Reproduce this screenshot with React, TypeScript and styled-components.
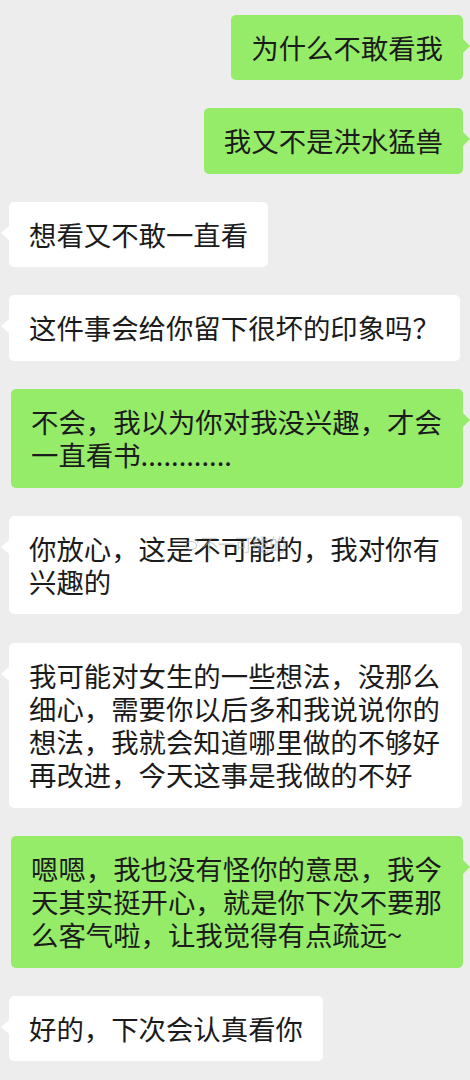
import React from "react";
import styled, { createGlobalStyle } from "styled-components";

const GlobalStyle = createGlobalStyle`
  html, body {
    margin: 0;
    padding: 0;
    background: #ededed;
  }
  body {
    font-family: "Noto Sans CJK SC", "Noto Sans", sans-serif;
  }
`;

const Chat = styled.div`
  display: flex;
  flex-direction: column;
  gap: 28.2px;
  padding: 15px 7px 20px 9px;
  min-height: 1080px;
  box-sizing: border-box;
  background: #ededed;
`;

const Row = styled.div<{ $mine: boolean }>`
  display: flex;
  justify-content: ${(p) => (p.$mine ? "flex-end" : "flex-start")};
  padding-left: ${(p) => (p.$mine ? "2px" : "0")};
`;

const Bubble = styled.div<{ $mine: boolean }>`
  position: relative;
  box-sizing: border-box;
  max-width: 453px;
  padding: 16px 20px;
  border-radius: 5px;
  background: ${(p) => (p.$mine ? "#95ec69" : "#ffffff")};
  color: #1b1b1b;
  font-size: 27.4px;
  line-height: 33.3px;
  word-break: break-all;

  &::after {
    content: "";
    position: absolute;
    top: 24px;
    width: 0;
    height: 0;
    border-top: 7px solid transparent;
    border-bottom: 7px solid transparent;
    ${(p) =>
      p.$mine
        ? `right: -7px; border-left: 7px solid #95ec69;`
        : `left: -8px; border-right: 8px solid #ffffff;`}
  }
`;

const Watermark = styled.span`
  position: absolute;
  left: 176px;
  top: 18px;
  display: flex;
  align-items: center;
  gap: 2px;
  font-size: 17px;
  line-height: 20px;
  color: rgba(170, 170, 170, 0.55);
  pointer-events: none;
  white-space: nowrap;
`;

type Msg = { mine: boolean; text: string; mark?: boolean };

const messages: Msg[] = [
  { mine: true, text: "为什么不敢看我" },
  { mine: true, text: "我又不是洪水猛兽" },
  { mine: false, text: "想看又不敢一直看" },
  { mine: false, text: "这件事会给你留下很坏的印象吗？" },
  { mine: true, text: "不会，我以为你对我没兴趣，才会一直看书............" },
  { mine: false, text: "你放心，这是不可能的，我对你有兴趣的", mark: true },
  {
    mine: false,
    text: "我可能对女生的一些想法，没那么细心，需要你以后多和我说说你的想法，我就会知道哪里做的不够好再改进，今天这事是我做的不好",
  },
  {
    mine: true,
    text: "嗯嗯，我也没有怪你的意思，我今天其实挺开心，就是你下次不要那么客气啦，让我觉得有点疏远~",
  },
  { mine: false, text: "好的，下次会认真看你" },
];

export default function App() {
  return (
    <>
      <GlobalStyle />
      <Chat>
        {messages.map((m, i) => (
          <Row key={i} $mine={m.mine}>
            <Bubble $mine={m.mine}>
              {m.text}
              {m.mark && (
                <Watermark>
                  <svg width="14" height="12" viewBox="0 0 14 12">
                    <ellipse cx="6" cy="7.5" rx="5.5" ry="4" fill="none" stroke="rgba(170,170,170,0.6)" strokeWidth="1.2" />
                    <path d="M9 1.5 A4 4 0 0 1 13 5" fill="none" stroke="rgba(170,170,170,0.6)" strokeWidth="1.2" />
                  </svg>
                  不一可能的
                </Watermark>
              )}
            </Bubble>
          </Row>
        ))}
      </Chat>
    </>
  );
}
